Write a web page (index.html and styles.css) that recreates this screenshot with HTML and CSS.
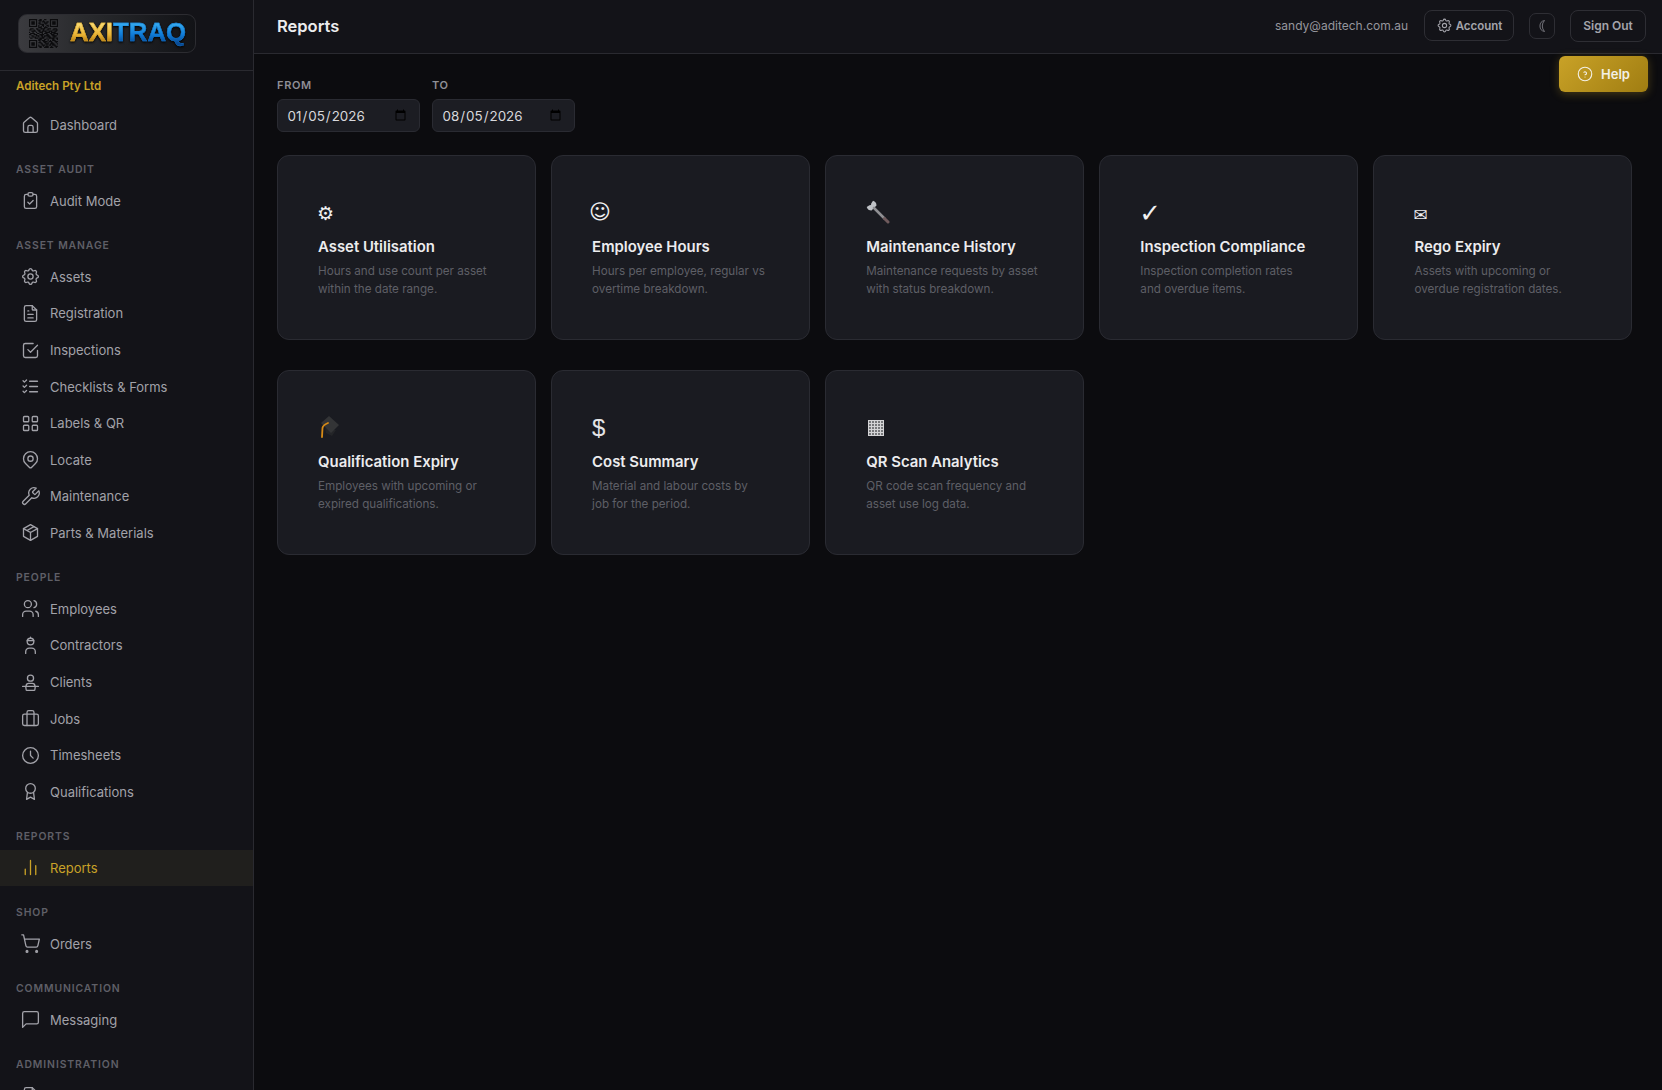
FILE: index.html
```html
<!DOCTYPE html>
<html lang="en">
<head>
<meta charset="utf-8">
<title>Reports</title>
<link rel="stylesheet" href="styles.css">
</head>
<body>
<svg class="defs" width="0" height="0" aria-hidden="true">
  <symbol id="i-home" viewBox="0 0 24 24"><path d="M4 11a2 2 0 0 1 .7-1.500l6-5.200a2 2 0 0 1 2.600 0l6 5.200A2 2 0 0 1 20 11v8a2 2 0 0 1-2 2H6a2 2 0 0 1-2-2z"/><path d="M9 21v-6a2 2 0 0 1 2-2h2a2 2 0 0 1 2 2v6"/></symbol>
  <symbol id="i-clip" viewBox="0 0 24 24"><path d="M9 5H7a2 2 0 0 0-2 2v12a2 2 0 0 0 2 2h10a2 2 0 0 0 2-2V7a2 2 0 0 0-2-2h-2"/><rect x="9" y="3" width="6" height="4" rx="2"/><path d="M9 14l2 2 4-4"/></symbol>
  <symbol id="i-gear" viewBox="0 0 24 24"><path d="M10.325 4.317c.426-1.756 2.924-1.756 3.350 0a1.724 1.724 0 0 0 2.573 1.066c1.543-.94 3.310.826 2.370 2.370a1.724 1.724 0 0 0 1.065 2.572c1.756.426 1.756 2.924 0 3.350a1.724 1.724 0 0 0-1.066 2.573c.94 1.543-.826 3.310-2.370 2.370a1.724 1.724 0 0 0-2.572 1.065c-.426 1.756-2.924 1.756-3.350 0a1.724 1.724 0 0 0-2.573-1.066c-1.543.94-3.310-.826-2.370-2.370a1.724 1.724 0 0 0-1.065-2.572c-1.756-.426-1.756-2.924 0-3.350a1.724 1.724 0 0 0 1.066-2.573c-.94-1.543.826-3.310 2.370-2.370 1 .608 2.296.07 2.572-1.065z"/><circle cx="12" cy="12" r="3"/></symbol>
  <symbol id="i-file" viewBox="0 0 24 24"><path d="M14 3v4a1 1 0 0 0 1 1h4"/><path d="M17 21H7a2 2 0 0 1-2-2V5a2 2 0 0 1 2-2h7l5 5v11a2 2 0 0 1-2 2z"/><path d="M9 9h1M9 13h6M9 17h6"/></symbol>
  <symbol id="i-check" viewBox="0 0 24 24"><path d="M9 11l3 3 8-8"/><path d="M20 12v6a2 2 0 0 1-2 2H6a2 2 0 0 1-2-2V6a2 2 0 0 1 2-2h9"/></symbol>
  <symbol id="i-list" viewBox="0 0 24 24"><path d="M3.500 5.500L5 7l2.500-2.500M3.500 11.500L5 13l2.500-2.500M3.500 17.500L5 19l2.500-2.500M11 6h9M11 12h9M11 18h9"/></symbol>
  <symbol id="i-grid" viewBox="0 0 24 24"><rect x="4" y="4" width="6" height="6" rx="1"/><rect x="14" y="4" width="6" height="6" rx="1"/><rect x="4" y="14" width="6" height="6" rx="1"/><rect x="14" y="14" width="6" height="6" rx="1"/></symbol>
  <symbol id="i-pin" viewBox="0 0 24 24"><path d="M9 11a3 3 0 1 0 6 0 3 3 0 0 0-6 0"/><path d="M17.657 16.657l-4.243 4.243a2 2 0 0 1-2.827 0l-4.244-4.243a8 8 0 1 1 11.314 0z"/></symbol>
  <symbol id="i-wrench" viewBox="0 0 24 24"><path d="M14.700 6.300a1 1 0 0 0 0 1.400l1.600 1.600a1 1 0 0 0 1.400 0l3.770-3.770a6 6 0 0 1-7.940 7.940l-6.910 6.910a2.120 2.120 0 0 1-3-3l6.910-6.910a6 6 0 0 1 7.940-7.940l-3.760 3.760z"/></symbol>
  <symbol id="i-box" viewBox="0 0 24 24"><path d="M12 3l8 4.500v9L12 21l-8-4.500v-9L12 3"/><path d="M12 12l8-4.500M12 12v9M12 12L4 7.500M16 5.250l-8 4.500"/></symbol>
  <symbol id="i-users" viewBox="0 0 24 24"><circle cx="9" cy="7" r="4"/><path d="M3 21v-2a4 4 0 0 1 4-4h4a4 4 0 0 1 4 4v2"/><path d="M16 3.130a4 4 0 0 1 0 7.750"/><path d="M21 21v-2a4 4 0 0 0-3-3.850"/></symbol>
  <symbol id="i-hard" viewBox="0 0 24 24"><circle cx="12" cy="7.500" r="3.800"/><path d="M8.200 6.500h7.600M12 2.500v1.200"/><path d="M6.500 21v-2a4 4 0 0 1 4-4h3a4 4 0 0 1 4 4v2"/></symbol>
  <symbol id="i-desk" viewBox="0 0 24 24"><circle cx="12" cy="7" r="3.500"/><path d="M7 16.500v-.5a3 3 0 0 1 3-3h4a3 3 0 0 1 3 3v.5"/><path d="M3 16.500h18"/><path d="M6.500 16.500l.5 3.500a1 1 0 0 0 1 1h8a1 1 0 0 0 1-1l.5-3.500"/></symbol>
  <symbol id="i-case" viewBox="0 0 24 24"><rect x="3" y="7" width="18" height="13" rx="2"/><path d="M8 7V5a2 2 0 0 1 2-2h4a2 2 0 0 1 2 2v2M8 7v13M16 7v13"/></symbol>
  <symbol id="i-clock" viewBox="0 0 24 24"><circle cx="12" cy="12" r="9"/><path d="M12 7v5l3 3"/></symbol>
  <symbol id="i-award" viewBox="0 0 24 24"><circle cx="12" cy="8.500" r="5.500"/><path d="M8.500 13l-1 8 4.500-2.500 4.500 2.500-1-8"/></symbol>
  <symbol id="i-bars" viewBox="0 0 24 24"><path d="M18 20V10M12 20V4M6 20v-6"/></symbol>
  <symbol id="i-cart" viewBox="0 0 24 24"><circle cx="8" cy="21" r="1"/><circle cx="19" cy="21" r="1"/><path d="M2.050 2.050h2l2.660 12.420a2 2 0 0 0 2 1.580h9.780a2 2 0 0 0 1.950-1.570l1.650-7.430H5.120"/></symbol>
  <symbol id="i-msg" viewBox="0 0 24 24"><path d="M21 15a2 2 0 0 1-2 2H7l-4 4V5a2 2 0 0 1 2-2h14a2 2 0 0 1 2 2z"/></symbol>
  <symbol id="i-help" viewBox="0 0 24 24"><circle cx="12" cy="12" r="9"/><path d="M12 16v.01M12 13a2 2 0 0 0 .914-3.782 1.980 1.980 0 0 0-2.414.483"/></symbol>
</svg>

<div class="app">
  <aside class="sidebar">
    <div class="brand">
      <div class="logo">
        <svg class="qr" viewBox="0 0 25 25"><path d="M0 .5h7M9 .5h2M13 .5h2M18 .5h7M0 1.500h1M6 1.500h1M8 1.500h3M12 1.500h1M18 1.500h1M24 1.500h1M0 2.500h1M2 2.500h3M6 2.500h1M9 2.500h1M11 2.500h3M15 2.500h2M18 2.500h1M20 2.500h3M24 2.500h1M0 3.500h1M2 3.500h3M6 3.500h1M8 3.500h2M13 3.500h3M18 3.500h1M20 3.500h3M24 3.500h1M0 4.500h1M2 4.500h3M6 4.500h1M9 4.500h4M14 4.500h1M18 4.500h1M20 4.500h3M24 4.500h1M0 5.500h1M6 5.500h1M8 5.500h1M11 5.500h2M15 5.500h2M18 5.500h1M24 5.500h1M0 6.500h7M8 6.500h1M10 6.500h1M12 6.500h1M14 6.500h1M16 6.500h1M18 6.500h7M8 7.500h3M13 7.500h3M1 8.500h3M6 8.500h2M10 8.500h4M16 8.500h3M21 8.500h3M0 9.500h2M4 9.500h1M7 9.500h3M12 9.500h1M15 9.500h2M20 9.500h2M23 9.500h2M2 10.500h4M8 10.500h2M11 10.500h4M17 10.500h3M22 10.500h2M0 11.500h1M3 11.500h1M6 11.500h1M9 11.500h3M14 11.500h4M19 11.500h4M1 12.500h4M7 12.500h2M11 12.500h1M13 12.500h3M18 12.500h2M21 12.500h4M0 13.500h2M4 13.500h3M9 13.500h4M15 13.500h2M19 13.500h3M24 13.500h1M2 14.500h2M6 14.500h3M10 14.500h2M13 14.500h5M20 14.500h4M0 15.500h1M3 15.500h3M8 15.500h1M11 15.500h3M16 15.500h3M21 15.500h2M1 16.500h2M5 16.500h3M9 16.500h4M15 16.500h1M17 16.500h5M23 16.500h2M8 17.500h3M13 17.500h2M16 17.500h1M20 17.500h2M24 17.500h1M0 18.500h7M8 18.500h2M11 18.500h3M16 18.500h1M18 18.500h1M20 18.500h3M0 19.500h1M6 19.500h1M9 19.500h1M12 19.500h4M17 19.500h3M22 19.500h3M0 20.500h1M2 20.500h3M6 20.500h1M8 20.500h3M13 20.500h2M16 20.500h1M19 20.500h2M23 20.500h1M0 21.500h1M2 21.500h3M6 21.500h1M10 21.500h2M14 21.500h3M18 21.500h4M24 21.500h1M0 22.500h1M2 22.500h3M6 22.500h1M8 22.500h1M11 22.500h3M15 22.500h1M17 22.500h2M20 22.500h3M0 23.500h1M6 23.500h1M8 23.500h3M12 23.500h1M14 23.500h3M19 23.500h1M22 23.500h3M0 24.500h7M9 24.500h2M13 24.500h4M18 24.500h3M23 24.500h1"/></svg>
        <span class="logo-word"><span class="logo-gold">AXI</span><span class="logo-blue">TRAQ</span></span>
      </div>
    </div>
    <div class="company">Aditech Pty Ltd</div>
    <nav class="nav">
      <a class="nav-item"><svg class="nav-icon"><use href="#i-home"/></svg>Dashboard</a>
      <div class="nav-label">Asset Audit</div>
      <a class="nav-item"><svg class="nav-icon"><use href="#i-clip"/></svg>Audit Mode</a>
      <div class="nav-label">Asset Manage</div>
      <a class="nav-item"><svg class="nav-icon"><use href="#i-gear"/></svg>Assets</a>
      <a class="nav-item"><svg class="nav-icon"><use href="#i-file"/></svg>Registration</a>
      <a class="nav-item"><svg class="nav-icon"><use href="#i-check"/></svg>Inspections</a>
      <a class="nav-item"><svg class="nav-icon"><use href="#i-list"/></svg>Checklists &amp; Forms</a>
      <a class="nav-item"><svg class="nav-icon"><use href="#i-grid"/></svg>Labels &amp; QR</a>
      <a class="nav-item"><svg class="nav-icon"><use href="#i-pin"/></svg>Locate</a>
      <a class="nav-item"><svg class="nav-icon"><use href="#i-wrench"/></svg>Maintenance</a>
      <a class="nav-item"><svg class="nav-icon"><use href="#i-box"/></svg>Parts &amp; Materials</a>
      <div class="nav-label">People</div>
      <a class="nav-item"><svg class="nav-icon"><use href="#i-users"/></svg>Employees</a>
      <a class="nav-item"><svg class="nav-icon"><use href="#i-hard"/></svg>Contractors</a>
      <a class="nav-item"><svg class="nav-icon"><use href="#i-desk"/></svg>Clients</a>
      <a class="nav-item"><svg class="nav-icon"><use href="#i-case"/></svg>Jobs</a>
      <a class="nav-item"><svg class="nav-icon"><use href="#i-clock"/></svg>Timesheets</a>
      <a class="nav-item"><svg class="nav-icon"><use href="#i-award"/></svg>Qualifications</a>
      <div class="nav-label">Reports</div>
      <a class="nav-item is-active"><svg class="nav-icon"><use href="#i-bars"/></svg>Reports</a>
      <div class="nav-label">Shop</div>
      <a class="nav-item"><svg class="nav-icon"><use href="#i-cart"/></svg>Orders</a>
      <div class="nav-label">Communication</div>
      <a class="nav-item"><svg class="nav-icon"><use href="#i-msg"/></svg>Messaging</a>
      <div class="nav-label">Administration</div>
      <a class="nav-item"><svg class="nav-icon"><use href="#i-file"/></svg></a>
    </nav>
  </aside>

  <main class="main">
    <header class="topbar">
      <h1 class="page-title">Reports</h1>
      <div class="top-actions">
        <span class="email">sandy@aditech.com.au</span>
        <a class="btn btn-account"><svg class="btn-icon"><use href="#i-gear"/></svg>Account</a>
        <button class="btn-theme" type="button" aria-label="Theme"><svg class="moon" viewBox="0 0 8 12"><path d="M6.500.5A5.600 5.600 0 0 0 6.500 11.500 8 8 0 0 1 6.500.5z"/></svg></button>
        <a class="btn btn-signout">Sign Out</a>
      </div>
    </header>
    <a class="help"><svg class="help-icon"><use href="#i-help"/></svg>Help</a>
    <section class="content">
      <div class="filters">
        <label class="field"><span class="field-label">From</span><input class="date" type="date" value="2026-01-05"></label>
        <label class="field"><span class="field-label">To</span><input class="date" type="date" value="2026-08-05"></label>
      </div>
      <div class="cards">
        <article class="card"><div class="card-icon"><span class="g g-gear">⚙</span></div><h2>Asset Utilisation</h2><p>Hours and use count per asset within the date range.</p></article>
        <article class="card"><div class="card-icon"><span class="g g-smile">☺</span></div><h2>Employee Hours</h2><p>Hours per employee, regular vs overtime breakdown.</p></article>
        <article class="card"><div class="card-icon">
          <svg class="art art-wrench" viewBox="0 0 24 24"><path class="wr-head" d="M7 .7L5.200 3.400 5 5 3.400 5.200.7 7A5 5 0 0 0 5.500 10.500L10.500 5.500A5 5 0 0 0 7 .7z"/><path class="wr-shaft" d="M8 8l10.500 10.500"/><path class="wr-end" d="M18.500 18.500l3.500 3.500"/></svg>
        </div><h2>Maintenance History</h2><p>Maintenance requests by asset with status breakdown.</p></article>
        <article class="card"><div class="card-icon"><span class="g g-check">✓</span></div><h2>Inspection Compliance</h2><p>Inspection completion rates and overdue items.</p></article>
        <article class="card"><div class="card-icon"><span class="g g-mail">✉</span></div><h2>Rego Expiry</h2><p>Assets with upcoming or overdue registration dates.</p></article>
        <article class="card"><div class="card-icon">
          <svg class="art art-cap" viewBox="0 0 22 28"><path class="cap-base" d="M7 13l11 2-4 6-6-3z"/><path class="cap-top" d="M11 1l10 9-8 8L3 8z"/><path class="cap-tassel" d="M10 8Q5 10 4.500 13L4 22"/></svg>
        </div><h2>Qualification Expiry</h2><p>Employees with upcoming or expired qualifications.</p></article>
        <article class="card"><div class="card-icon"><span class="g g-dollar">$</span></div><h2>Cost Summary</h2><p>Material and labour costs by job for the period.</p></article>
        <article class="card"><div class="card-icon">
          <svg class="art art-qr" viewBox="0 0 16 16"><rect class="qr-bg" width="16" height="16"/><path class="qr-lines" d="M.5 0v16M3.500 0v16M6.500 0v16M9.500 0v16M12.500 0v16M15.500 0v16M0 .5h16M0 3.500h16M0 6.500h16M0 9.500h16M0 12.500h16M0 15.500h16"/></svg>
        </div><h2>QR Scan Analytics</h2><p>QR code scan frequency and asset use log data.</p></article>
      </div>
    </section>
  </main>
</div>
</body>
</html>
```
FILE: styles.css
```css
* { box-sizing: border-box; }
html, body { margin: 0; height: 100%; }
body {
  background: #0c0c0f;
  color: #e8e8ea;
  font-family: Inter, "Liberation Sans", sans-serif;
  overflow: hidden;
}
.defs { position: absolute; }
.app { display: flex; height: 100vh; overflow: hidden; }

/* Sidebar */
.sidebar {
  flex: 0 0 254px;
  background: #131318;
  border-right: 1px solid #2a2a30;
  overflow: hidden;
}
.brand {
  height: 71px;
  padding: 14px 0 0 18px;
  border-bottom: 1px solid #2a2a30;
}
.logo {
  width: 178px;
  height: 39px;
  display: flex;
  align-items: center;
  padding-left: 9px;
  gap: 11px;
  border-radius: 9px;
  border: 1px solid #2c2c31;
  background: linear-gradient(90deg, #3b3b3f 0%, #2a2b2e 35%, #121317 100%);
}
.qr { width: 31px; height: 29px; flex: none; }
.qr path { stroke: #0b0b0d; stroke-width: 1; fill: none; }
.logo-word {
  font-family: "Liberation Sans", Arial, sans-serif;
  font-weight: 700;
  font-size: 25.800px;
  line-height: 30px;
  margin-top: -3px;
  filter: drop-shadow(0 1px 1px #000);
}
.logo-gold, .logo-blue { -webkit-background-clip: text; background-clip: text; color: transparent; }
.logo-gold { background-image: linear-gradient(180deg, #fbe07a 15%, #e9b233 60%, #a8700f 90%); -webkit-text-stroke: 0.4px #e2ab30; }
.logo-blue { background-image: linear-gradient(180deg, #39b0f2 15%, #0f7ad6 60%, #094a94 90%); -webkit-text-stroke: 0.4px #1478d0; }
.company {
  margin-top: 7.500px;
  padding-left: 16px;
  color: #c9a227;
  font-size: 11.600px;
  font-weight: 600;
  line-height: 15px;
}
.nav { padding-top: 13px; }
.nav-item {
  height: 36.570px;
  display: flex;
  align-items: center;
  gap: 9.500px;
  padding-left: 19.500px;
  color: #a2a2a9;
  font-size: 13px;
}
.nav-icon {
  width: 21px;
  height: 21px;
  flex: none;
  fill: none;
  stroke: currentColor;
  stroke-width: 1.500;
  stroke-linecap: round;
  stroke-linejoin: round;
}
.nav-item.is-active { background: #201f1d; color: #c9a227; }
.nav-label {
  margin: 19.750px 0 5.750px;
  padding-left: 16px;
  color: #5f5f67;
  font-size: 10.400px;
  font-weight: 600;
  letter-spacing: 0.900px;
  line-height: 14px;
  text-transform: uppercase;
}

/* Main */
.main { flex: 1; min-width: 0; position: relative; }
.topbar {
  height: 54px;
  display: flex;
  align-items: center;
  justify-content: space-between;
  padding: 0 16px 2px 23px;
  background: #131318;
  border-bottom: 1px solid #2a2a30;
}
.page-title { margin: 0; font-size: 16.500px; font-weight: 600; color: #ececee; }
.top-actions { display: flex; align-items: center; }
.email { font-size: 12px; color: #96969d; margin-right: 16px; }
.btn {
  display: flex;
  align-items: center;
  border: 1px solid #2e2e34;
  border-radius: 8px;
  color: #a4a4ab;
  font-size: 12px;
  font-weight: 600;
}
.btn-account { width: 90px; height: 31px; justify-content: center; gap: 3px; font-size: 11.500px; }
.btn-icon {
  width: 17px;
  height: 17px;
  fill: none;
  stroke: currentColor;
  stroke-width: 1.500;
  stroke-linecap: round;
  stroke-linejoin: round;
}
.btn-theme {
  width: 26px;
  height: 26px;
  margin: 0 15px;
  padding: 0;
  display: flex;
  align-items: center;
  justify-content: center;
  background: none;
  border: 1px solid #2e2e34;
  border-radius: 7px;
}
.moon { width: 8px; height: 12px; fill: none; stroke: #7c7c83; stroke-width: 0.900; }
.btn-signout { width: 76px; height: 32px; justify-content: center; }

.help {
  position: absolute;
  top: 56px;
  right: 14px;
  width: 89px;
  height: 36px;
  display: flex;
  align-items: center;
  justify-content: center;
  gap: 7px;
  padding-right: 1px;
  border-radius: 6px;
  background: linear-gradient(135deg, #c9a227, #a07d12);
  box-shadow: 0 2px 10px rgba(201, 162, 39, 0.3);
  color: #f3f0e6;
  font-size: 13px;
  font-weight: 600;
}
.help-icon {
  width: 18px;
  height: 18px;
  fill: none;
  stroke: currentColor;
  stroke-width: 1.500;
  stroke-linecap: round;
  stroke-linejoin: round;
}

/* Content */
.content { padding: 24px 29.600px 0 23px; }
.filters { display: flex; gap: 12px; margin-bottom: 23.500px; }
.field { display: flex; flex-direction: column; gap: 7px; }
.field-label {
  color: #8f8f96;
  font-size: 11px;
  font-weight: 600;
  letter-spacing: 0.660px;
  line-height: 14px;
  text-transform: uppercase;
}
.date {
  width: 143px;
  height: 32.500px;
  padding: 1px 10px 0 8.500px;
  background: #1c1d23;
  border: 1px solid #2a2b32;
  border-radius: 6px;
  color: #d8d8dc;
  font-family: Inter, sans-serif;
  font-size: 13.400px;
}
.cards {
  display: grid;
  grid-template-columns: repeat(5, 1fr);
  column-gap: 15.200px;
  row-gap: 30.600px;
}
.card {
  height: 184.500px;
  padding: 40px;
  background: #1a1b21;
  border: 1px solid #2a2b32;
  border-radius: 12px;
}
.card-icon {
  height: 40.700px;
  display: flex;
  align-items: flex-start;
}
.card h2 {
  margin: 0;
  color: #ececee;
  font-size: 14.900px;
  font-weight: 600;
  line-height: 20px;
}
.card p {
  margin: 5px 0 0;
  max-width: 174px;
  color: #5e5f66;
  font-size: 11.650px;
  line-height: 18px;
}
.g { font-family: "DejaVu Sans", sans-serif; color: #f0f0f2; display: block; }
.g-gear { font-size: 19px; line-height: 28px; margin: 3px 0 0 -1px; }
.g-smile { font-size: 21px; line-height: 28px; margin: 2px 0 0 -3px; }
.g-check { font-size: 26px; line-height: 28px; margin: 3px 0 0 -1px; }
.g-mail { font-size: 17px; line-height: 28px; margin: 5px 0 0 -1px; }
.g-dollar { font-size: 24px; line-height: 30px; margin-top: 2px; font-family: "Liberation Sans", sans-serif; color: #e4e4e6; }
.art { display: block; }
.art-wrench { width: 24px; height: 24px; margin-top: 4px; }
.wr-head { fill: #bfc2c7; }
.wr-shaft { stroke: #8f8f93; stroke-width: 2.600; stroke-linecap: round; }
.wr-end { stroke: #6f5a5c; stroke-width: 3; stroke-linecap: round; }
.art-cap { width: 22px; height: 28px; margin-top: 4px; }
.cap-top { fill: #333436; }
.cap-base { fill: #242528; }
.cap-tassel { fill: none; stroke: #d68a16; stroke-width: 1.800; stroke-linecap: round; }
.art-qr { width: 16px; height: 16px; margin: 9px 0 0 2px; }
.qr-bg { fill: #77787b; }
.qr-lines { stroke: #d4d4d6; stroke-width: 1; fill: none; }
```
